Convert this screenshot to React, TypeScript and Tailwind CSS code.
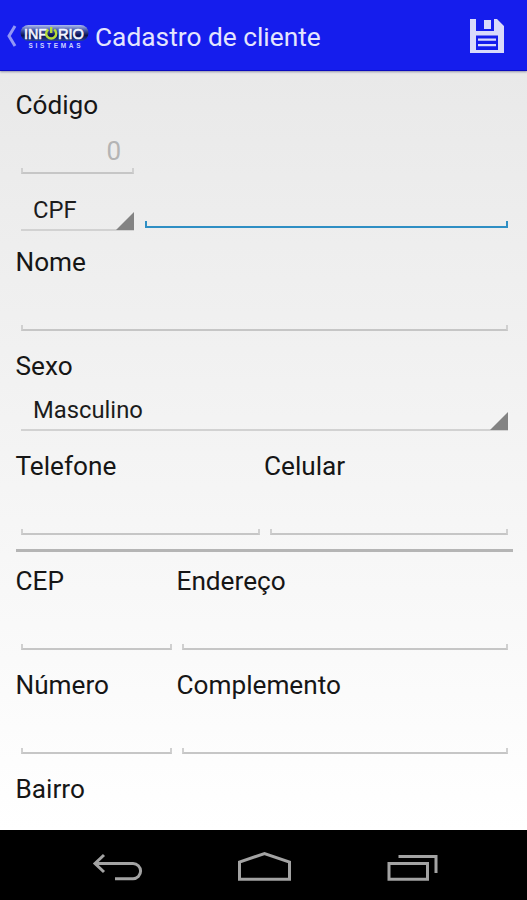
import { clsx } from 'clsx';

type FieldProps = {
  label?: string;
  value?: string;
  className?: string;
};

function Label({ children }: { children: string }) {
  return <label className="-ml-[0.5px] block h-[30px] text-[26.2px] leading-[30px] whitespace-nowrap text-[#161616]">{children}</label>;
}

// Holo style underline with small ticks on both ends
function Underline({ focused = false }: { focused?: boolean }) {
  return (
    <div
      className={clsx(
        'border-x-2 border-b-2',
        focused ? 'h-[7px] border-[#2f8fc4]' : 'h-1.5 border-x-[#d0d0d0] border-b-[#c6c6c6]'
      )}
    />
  );
}

function TextField({ label, value, className }: FieldProps) {
  return (
    <div className={className}>
      {label && <Label>{label}</Label>}
      <div className="h-12 pt-4 pr-[18px] text-right text-[26px] leading-[30px] text-[#b4b4b4]">{value}</div>
      <div className="mx-[5px]">
        <Underline />
      </div>
    </div>
  );
}

function Spinner({ value, className }: FieldProps) {
  return (
    <div className={clsx('flex items-end justify-between border-b-2 border-[#d2d2d2]', className)}>
      <span className="pl-3 pb-[5px] text-[23.8px] leading-7 text-[#1c1c1c]">{value}</span>
      <svg width="18" height="18" viewBox="0 0 18 18" className="-mb-px shrink-0">
        <path d="M18 0v18H0z" fill="#838383" />
      </svg>
    </div>
  );
}

function Logo() {
  return (
    <svg width="70" height="26" viewBox="0 0 70 26" className="shrink-0">
      <defs>
        <linearGradient id="pill" x1="0" y1="0" x2="0" y2="1">
          <stop offset="0" stopColor="#aebcf0" />
          <stop offset="0.35" stopColor="#4052a6" />
          <stop offset="0.65" stopColor="#0b1250" />
          <stop offset="1" stopColor="#27439c" />
        </linearGradient>
      </defs>
      <rect x="0.5" y="2" width="68" height="16" rx="8" fill="url(#pill)" />
      <g fill="#f4f6ff" fontFamily="'Liberation Sans', Arial, sans-serif">
        <text x="4" y="15.5" fontSize="15.5" stroke="#f4f6ff" strokeWidth="0.6" textLength="23" lengthAdjust="spacingAndGlyphs">INF</text>
        <text x="38" y="15.5" fontSize="15.5" stroke="#f4f6ff" strokeWidth="0.6" textLength="26" lengthAdjust="spacingAndGlyphs">RIO</text>
        <text x="8.5" y="24.5" fontSize="6.5" fontWeight="700" fill="#cdd2ff" textLength="52">SISTEMAS</text>
      </g>
      <path d="M28.2 6.5a5 5 0 1 0 6 0M31.2 4v6" fill="none" stroke="#b6dc38" strokeWidth="2.4" />
    </svg>
  );
}

function SaveIcon() {
  return (
    <svg width="34" height="34" viewBox="0 0 34 34">
      <path
        fillRule="evenodd"
        fill="#d9dafb"
        d="M0 0h6v12h18V0h3l7 7v27H0zM6 16.5v14.5h22V16.5z"
      />
      <path d="M14 1h7v9h-7zM8 19.5h18v2.2H8zM8 25h18v2.2H8z" fill="#d9dafb" />
    </svg>
  );
}

function ActionBar() {
  return (
    <header className="relative flex h-[71px] shrink-0 items-center border-b border-[#0b0bc0] bg-[#151ded] pt-0.5 pr-[23px] pl-[7px] shadow-[0_1px_2px_rgba(60,60,110,0.5)]">
      <svg width="10" height="22" viewBox="0 0 10 22" className="mr-[3px] shrink-0">
        <path d="M8 1L2 11l6 10" fill="none" stroke="#9297f6" strokeWidth="3" />
      </svg>
      <Logo />
      <h1 className="ml-[5px] flex-1 pt-0.5 text-[26.3px] leading-[30px] whitespace-nowrap text-[#e4e5fd]">Cadastro de cliente</h1>
      <SaveIcon />
    </header>
  );
}

function NavBar() {
  return (
    <nav className="h-[70px] bg-black">
      <svg width="527" height="70" viewBox="0 0 527 70" fill="none" stroke="#a3a3a3" strokeWidth="3">
        <path d="M104 25l-9 8.5 9 8.5M96 33.5h37a7.5 7.5 0 0 1 0 15.2h-18" />
        <path d="M239.5 49.2V32L264.5 23.500 289.500 32v17.2z" />
        <path d="M389 33.5h38.5v15.7H389zM398.5 26.5h37.500v16.5" />
      </svg>
    </nav>
  );
}

export default function App() {
  return (
    <div className="flex h-[900px] w-[527px] flex-col overflow-hidden bg-black font-['Roboto',sans-serif]">
      <ActionBar />
      <main className="h-[759px] bg-linear-to-b from-[#e9e9e9] to-white pt-[19px] pr-[14px] pl-[16px]">
        <TextField label="Código" value="0" className="w-[123px]" />

        <div className="mt-[14px] flex h-[43px] gap-[11px] pr-[5px] pl-[5px]">
          <Spinner value="CPF" className="w-[113px]" />
          <div className="flex-1 pt-[33px]">
            <Underline focused />
          </div>
        </div>

        <TextField label="Nome" className="mt-4" />

        <div className="mt-5">
          <Label>Sexo</Label>
          <Spinner value="Masculino" className="mx-[5px] h-[50px]" />
        </div>

        <div className="mt-5 grid grid-cols-2">
          <TextField label="Telefone" />
          <TextField label="Celular" />
        </div>

        <hr className="mt-[14px] mb-[14px] h-[3px] border-0 bg-[#b5b5b5]" />

        <div className="grid grid-cols-[161px_1fr] gap-y-[20px]">
          <TextField label="CEP" />
          <TextField label="Endereço" />
          <TextField label="Número" />
          <TextField label="Complemento" />
          <Label>Bairro</Label>
        </div>
      </main>
      <NavBar />
    </div>
  );
}
